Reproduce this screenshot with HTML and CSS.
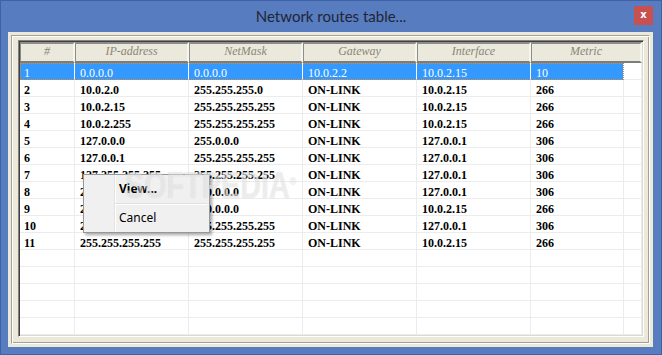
FILE: index.html
```html
<!DOCTYPE html>
<html lang="en">
<head>
    <meta charset="UTF-8">
    <title>Network routes table...</title>
    <link rel="stylesheet" href="styles.css">
</head>
<body>
    <div class="window">
        <div class="titlebar">
            <span></span>
            <span class="title">Network routes table...</span>
            <span class="close">x</span>
        </div>
        <div class="client">
            <div class="frame">
                <div class="grid">
                    <div class="header">
                        <div class="th">#</div>
                        <div class="th">IP-address</div>
                        <div class="th">NetMask</div>
                        <div class="th">Gateway</div>
                        <div class="th">Interface</div>
                        <div class="th">Metric</div>
                    </div>
                    <div class="row selected">
                        <div class="cells"><div>1</div><div>0.0.0.0</div><div>0.0.0.0</div><div>10.0.2.2</div><div>10.0.2.15</div><div>10</div></div>
                        <div class="filler"></div>
                    </div>
                    <div class="row">
                        <div class="cells"><div>2</div><div>10.0.2.0</div><div>255.255.255.0</div><div>ON-LINK</div><div>10.0.2.15</div><div>266</div></div>
                        <div class="filler"></div>
                    </div>
                    <div class="row">
                        <div class="cells"><div>3</div><div>10.0.2.15</div><div>255.255.255.255</div><div>ON-LINK</div><div>10.0.2.15</div><div>266</div></div>
                        <div class="filler"></div>
                    </div>
                    <div class="row">
                        <div class="cells"><div>4</div><div>10.0.2.255</div><div>255.255.255.255</div><div>ON-LINK</div><div>10.0.2.15</div><div>266</div></div>
                        <div class="filler"></div>
                    </div>
                    <div class="row">
                        <div class="cells"><div>5</div><div>127.0.0.0</div><div>255.0.0.0</div><div>ON-LINK</div><div>127.0.0.1</div><div>306</div></div>
                        <div class="filler"></div>
                    </div>
                    <div class="row">
                        <div class="cells"><div>6</div><div>127.0.0.1</div><div>255.255.255.255</div><div>ON-LINK</div><div>127.0.0.1</div><div>306</div></div>
                        <div class="filler"></div>
                    </div>
                    <div class="row">
                        <div class="cells"><div>7</div><div>127.255.255.255</div><div>255.255.255.255</div><div>ON-LINK</div><div>127.0.0.1</div><div>306</div></div>
                        <div class="filler"></div>
                    </div>
                    <div class="row">
                        <div class="cells"><div>8</div><div>224.0.0.0</div><div>240.0.0.0</div><div>ON-LINK</div><div>127.0.0.1</div><div>306</div></div>
                        <div class="filler"></div>
                    </div>
                    <div class="row">
                        <div class="cells"><div>9</div><div>224.0.0.0</div><div>240.0.0.0</div><div>ON-LINK</div><div>10.0.2.15</div><div>266</div></div>
                        <div class="filler"></div>
                    </div>
                    <div class="row">
                        <div class="cells"><div>10</div><div>255.255.255.255</div><div>255.255.255.255</div><div>ON-LINK</div><div>127.0.0.1</div><div>306</div></div>
                        <div class="filler"></div>
                    </div>
                    <div class="row">
                        <div class="cells"><div>11</div><div>255.255.255.255</div><div>255.255.255.255</div><div>ON-LINK</div><div>10.0.2.15</div><div>266</div></div>
                        <div class="filler"></div>
                    </div>
                    <div class="row">
                        <div class="cells"><div></div><div></div><div></div><div></div><div></div><div></div></div>
                        <div class="filler"></div>
                    </div>
                    <div class="row">
                        <div class="cells"><div></div><div></div><div></div><div></div><div></div><div></div></div>
                        <div class="filler"></div>
                    </div>
                    <div class="row">
                        <div class="cells"><div></div><div></div><div></div><div></div><div></div><div></div></div>
                        <div class="filler"></div>
                    </div>
                    <div class="row">
                        <div class="cells"><div></div><div></div><div></div><div></div><div></div><div></div></div>
                        <div class="filler"></div>
                    </div>
                    <div class="row">
                        <div class="cells"><div></div><div></div><div></div><div></div><div></div><div></div></div>
                        <div class="filler"></div>
                    </div>
                </div>
            </div>
        </div>

        <!-- right-click menu over the table -->
        <div class="menu">
            <div class="menu-item bold">View...</div>
            <div class="menu-sep"></div>
            <div class="menu-item">Cancel</div>
        </div>

        <div class="watermark">SOFTPEDIA<sup>&reg;</sup></div>
    </div>
</body>
</html>
```

FILE: styles.css
```css
* {
    box-sizing: border-box;
}
body {
    margin: 0;
    background: #587cc0;
}
.window {
    position: relative;
    width: 662px;
    height: 355px;
    border: 1px solid #3f61a5;
    background: #587cc0;
    display: flex;
    flex-direction: column;
    overflow: hidden;
}
.titlebar {
    height: 31px;
    display: grid;
    grid-template-columns: 1fr auto 1fr;
    align-items: start;
}
.title {
    font-family: 'Lato', sans-serif;
    font-size: 15px;
    line-height: 31px;
    color: #1e2634;
}
.close {
    justify-self: end;
    width: 19px;
    height: 19px;
    margin: 5px 8px 0 0;
    background: #c75050;
    color: #ffffff;
    font-family: 'DejaVu Sans', sans-serif;
    font-weight: bold;
    font-size: 10px;
    line-height: 17px;
    text-align: center;
}
.client {
    flex: 1;
    margin: 0 8px 7px 7px;
    padding: 3px;
    background: #ece9d8;
    display: flex;
}
.frame {
    flex: 1;
    border: 1px solid;
    border-color: #a0a0a0 #ffffff #ffffff #a0a0a0;
    box-shadow: inset 1px 1px #ffffff, inset -1px -1px #a0a0a0;
    padding: 4px 5px 6px 6px;
    display: flex;
}
.grid {
    flex: 1;
    background: #ffffff;
    border: 1px solid;
    border-color: #828282 #ffffff #ffffff #828282;
    box-shadow: inset 1px 1px #404040, inset -1px -1px #dcdad0;
    padding: 1px;
    overflow: hidden;
}
.header {
    display: grid;
    grid-template-columns: 55px 114px 114px 114px 114px 111px;
    height: 21px;
    background: #ebe9db;
}
.th {
    border-top: 2px solid #8c8c8c;
    border-left: 1px solid #8c8c8c;
    border-right: 2px solid #f6f5ee;
    border-bottom: 2px solid #7c7c7c;
    font-family: 'Liberation Serif', serif;
    font-style: italic;
    font-size: 12px;
    line-height: 15px;
    color: #8a8677;
    text-align: center;
}
.row {
    display: flex;
    height: 17px;
}
.cells {
    display: grid;
    grid-template-columns: 55px 114px 114px 114px 114px 93px;
}
.cells div,
.filler {
    height: 17px;
    border-right: 1px solid #ececec;
    border-bottom: 1px solid #ececec;
}
.cells div {
    padding: 2px 0 0 5px;
    font-family: 'Liberation Serif', serif;
    font-weight: bold;
    font-size: 12px;
    line-height: 16px;
    color: #000000;
    white-space: nowrap;
    overflow: hidden;
}
.cells div:first-child {
    padding-left: 4px;
}
.filler {
    width: 18px;
}
.selected .cells {
    outline: 1px dotted #e0892a;
    outline-offset: -1px;
}
.selected .cells div {
    background: #3399ff;
    color: #ffffff;
    font-weight: normal;
    border-right-color: #ffffff;
    border-bottom-color: #3399ff;
}
.menu {
    position: absolute;
    left: 82px;
    top: 173px;
    width: 127px;
    background: #f0f0f0 linear-gradient(to right, transparent 30px, #e2e3e3 30px, #e2e3e3 31px, #ffffff 31px, #ffffff 32px, transparent 32px);
    border: 1px solid #979797;
    box-shadow: 2px 2px 3px rgba(0, 0, 0, 0.35);
    padding: 1px 0;
}
.menu-item {
    height: 26px;
    padding-left: 35px;
    font-family: 'Noto Sans', sans-serif;
    font-size: 12px;
    line-height: 26px;
    color: #000000;
}
.menu-item.bold {
    font-weight: bold;
}
.menu-sep {
    margin: 1px 2px 0 31px;
    height: 2px;
    border-top: 1px solid #e0e0e0;
    border-bottom: 1px solid #ffffff;
}
.watermark {
    position: absolute;
    left: 124px;
    top: 164px;
    font-family: 'Liberation Sans', sans-serif;
    font-weight: bold;
    font-size: 36px;
    transform: scaleX(0.8);
    transform-origin: left top;
    color: rgba(255, 255, 255, 0.5);
    text-shadow: 0 0 1px rgba(0, 0, 0, 0.15);
    pointer-events: none;
}
.watermark sup {
    font-size: 11px;
}
```
